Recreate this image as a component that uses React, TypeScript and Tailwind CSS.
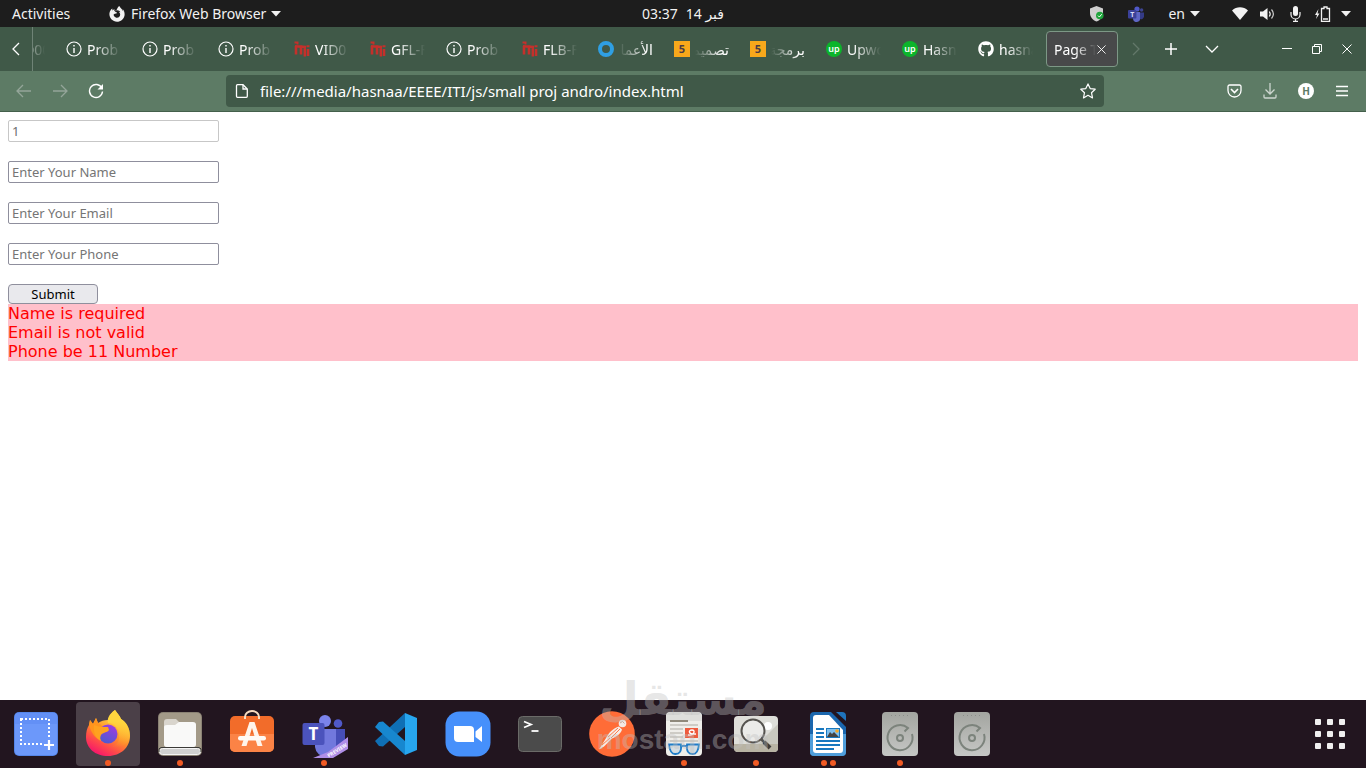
import { ReactNode, useState } from "react"
import clsx from "clsx"
import { FaFirefoxBrowser, FaGithub } from "react-icons/fa"

const ARABIC = /[\u0600-\u06FF]/

function Caret() {
  return (
    <svg width="10" height="6" viewBox="0 0 10 6" fill="#f2f2f2">
      <path d="M0 0h10L5 5.5z" />
    </svg>
  )
}

function TeamsMark({ size }: { size: number }) {
  return (
    <svg width={size} height={size} viewBox="0 0 16 16">
      <circle cx="9" cy="3" r="2.6" fill="#5059c9" />
      <circle cx="13.6" cy="4" r="1.7" fill="#3d4490" />
      <path d="M5 6h7v6a3.5 3.5 0 0 1-7 1z" fill="#5f66c4" />
      <path d="M12 6.5h4v4a3 3 0 0 1-4 2.6z" fill="#343b86" />
      <rect x="0" y="4" width="8.4" height="8.4" rx="1" fill="#3b4199" />
      <text x="4.2" y="10.8" textAnchor="middle" fontSize="7" fontWeight="700" fill="#d8daf5" fontFamily="Noto Sans">
        T
      </text>
    </svg>
  )
}

function TopBar() {
  return (
    <header className="grid h-[27px] shrink-0 grid-cols-[1fr_auto_1fr] items-center bg-[#1d1d1d] text-sm text-[#f2f2f2]">
      <div className="flex items-center pl-3">
        <button className="w-[97px] text-left">Activities</button>
        <button className="flex items-center gap-[5px]">
          <FaFirefoxBrowser size={16} className="mr-px" />
          Firefox Web Browser
          <Caret />
        </button>
      </div>
      <button className="flex gap-2">
        <span>03:37</span>
        <span>14 فبر</span>
      </button>
      <div className="flex items-center justify-end pr-[15px]">
        <svg className="mr-6" width="14" height="16" viewBox="0 0 14 16">
          <path d="M6.5 0 13 2.4V7c0 4-2.7 7-6.5 8.6C2.7 14 0 11 0 7V2.4z" fill="#cfcfcf" />
          <circle cx="9.8" cy="9.5" r="3.8" fill="#1fa53c" />
          <path d="m8 9.6 1.4 1.4 2.3-2.8" fill="none" stroke="#fff" />
        </svg>
        <TeamsMark size={16} />
        <button className="ml-6 flex items-center gap-[5px]">
          en
          <Caret />
        </button>
        <svg className="ml-8" width="16" height="13" viewBox="0 0 16 13" fill="#f2f2f2">
          <path d="M0 3.5C4.5-.8 11.5-.8 16 3.5L8 13z" />
        </svg>
        <svg className="ml-3" width="16" height="14" viewBox="0 0 16 14" fill="none" stroke="#f2f2f2" strokeWidth="1.2">
          <path d="M0 4.5h3L7.5 1v12L3 9.5H0z" fill="#f2f2f2" stroke="none" />
          <path d="M9.3 4.5q1.8 2.5 0 5" />
          <path d="M11.5 2.5q3.8 4.5 0 9" stroke="#ccc" />
        </svg>
        <svg className="ml-3.5" width="11" height="16" viewBox="0 0 11 16">
          <rect x="3" y="0" width="5" height="10" rx="2.5" fill="#f2f2f2" />
          <path d="M1 6v2.5a4.5 4.5 0 0 0 9 0V6M5.5 13v2.5M3 15.3h5" fill="none" stroke="#f2f2f2" strokeWidth="1.2" />
        </svg>
        <svg className="ml-3.5" width="16" height="16" viewBox="0 0 16 16">
          <path d="M3.5 3 0 9h2L1 13l3.500-5.500h-2z" fill="#f2f2f2" />
          <path d="M7 2.5h2V1h3v1.5h2.5v13h-8v-13z" fill="none" stroke="#f2f2f2" strokeWidth="1.3" />
          <path d="M8 13h5" stroke="#f2f2f2" strokeWidth="1.5" />
        </svg>
        <span className="ml-2.5">
          <Caret />
        </span>
      </div>
    </header>
  )
}

function TabIcon({ kind }: { kind: string }) {
  switch (kind) {
    case "info":
      return (
        <svg width="16" height="16" viewBox="0 0 16 16" fill="none" stroke="#fff">
          <circle cx="8" cy="8" r="7" strokeWidth="1.2" />
          <path d="M8 7v5M8 4v1.5" strokeWidth="1.4" />
        </svg>
      )
    case "iti":
      return (
        <svg width="16" height="16" viewBox="0 0 16 16" fill="none" stroke="#c4302b">
          <path d="M2 5v8.5M7 4.5v9M14 8v7" strokeWidth="2.6" />
          <path d="M1 5.200l11 .800M10.800 6v9.500" strokeWidth="2.400" />
          <path d="M.500 1.500h3v2M12.500 5.200h3" strokeWidth="2" />
        </svg>
      )
    case "ring":
      return (
        <svg width="16" height="16" viewBox="0 0 16 16">
          <circle cx="8" cy="8" r="6" fill="none" stroke="#2f9fe3" strokeWidth="4" />
        </svg>
      )
    case "five":
      return (
        <svg width="16" height="16" viewBox="0 0 16 16">
          <rect width="16" height="16" fill="#f8a81b" />
          <text x="8" y="12" textAnchor="middle" fontSize="11" fontWeight="700" fill="#4a3b45" fontFamily="Noto Sans">
            5
          </text>
        </svg>
      )
    case "upwork":
      return (
        <svg width="16" height="16" viewBox="0 0 16 16">
          <circle cx="8" cy="8" r="8" fill="#0bb52b" />
          <text x="8" y="10.5" textAnchor="middle" fontSize="9" fontWeight="600" fill="#fff" fontFamily="Noto Sans">
            up
          </text>
        </svg>
      )
    default:
      return <FaGithub size={16} color="#fff" />
  }
}

const tabs = [
  { icon: "iti", title: "VID00" },
  { icon: "info", title: "Prob" },
  { icon: "info", title: "Prob" },
  { icon: "info", title: "Prob" },
  { icon: "iti", title: "VID0" },
  { icon: "iti", title: "GFL-F" },
  { icon: "info", title: "Prob" },
  { icon: "iti", title: "FLB-F" },
  { icon: "ring", title: "الأعمال" },
  { icon: "five", title: "تصميم" },
  { icon: "five", title: "برمجة" },
  { icon: "upwork", title: "Upwo" },
  { icon: "upwork", title: "Hasn" },
  { icon: "github", title: "hasna" },
]

function Cross({ size }: { size: number }) {
  return (
    <svg width={size} height={size} viewBox="0 0 10 10" fill="none" stroke="#fff">
      <path d="m.5.5 9 9M9.5.5l-9 9" />
    </svg>
  )
}

function TabStrip() {
  return (
    <div className="flex h-11 shrink-0 bg-[#405948] text-sm text-white">
      <button aria-label="Scroll tabs left" className="flex w-8 items-center justify-center">
        <svg width="8" height="14" viewBox="0 0 8 14" fill="none" stroke="#fff" strokeWidth="1.3">
          <path d="M7 1 1 7l6 6" />
        </svg>
      </button>
      <div className="flex min-w-0 flex-1 justify-end overflow-hidden border-l border-[#6f8376] py-1">
        {tabs.map((tab, i) => {
          const rtl = ARABIC.test(tab.title)
          return (
            <button key={i} className="flex w-[76px] shrink-0 items-center gap-[5px] pt-0.5 pl-2">
              <span className="-mt-0.5 shrink-0">
                <TabIcon kind={tab.icon} />
              </span>
              <span
                dir={rtl ? "rtl" : "ltr"}
                className={clsx(
                  "w-[34px] overflow-hidden text-start whitespace-nowrap",
                  rtl
                    ? "[mask-image:linear-gradient(to_left,black_20%,transparent)]"
                    : "[mask-image:linear-gradient(to_right,black_20%,transparent)]"
                )}
              >
                {tab.title}
              </span>
            </button>
          )
        })}
        <div className="mr-1 flex w-[72px] shrink-0 items-center rounded-sm border border-[#7d9886] bg-[#48494a] pl-[7px]">
          <button className="w-[42px] overflow-hidden pt-0.5 text-left whitespace-nowrap [mask-image:linear-gradient(to_right,black_50%,transparent)]">
            Page T
          </button>
          <button aria-label="Close tab" className="p-px">
            <Cross size={9} />
          </button>
        </div>
      </div>
      <button aria-label="Scroll tabs right" className="flex w-7 items-center justify-center">
        <svg width="8" height="14" viewBox="0 0 8 14" fill="none" stroke="#63786a" strokeWidth="1.3">
          <path d="m1 1 6 6-6 6" />
        </svg>
      </button>
      <button aria-label="New tab" className="flex w-[42px] items-center justify-center">
        <svg width="12" height="12" viewBox="0 0 12 12" stroke="#fff" strokeWidth="1.5">
          <path d="M6 0v12M0 6h12" />
        </svg>
      </button>
      <button aria-label="List all tabs" className="flex w-10 items-center justify-center">
        <svg width="14" height="8" viewBox="0 0 14 8" fill="none" stroke="#fff" strokeWidth="1.3">
          <path d="m1 1 6 6 6-6" />
        </svg>
      </button>
      <div className="flex pr-1 pl-10">
        <button aria-label="Minimize" className="flex w-[30px] items-center justify-center">
          <svg width="10" height="2" viewBox="0 0 10 2">
            <path d="M0 .5h10" stroke="#fff" />
          </svg>
        </button>
        <button aria-label="Restore" className="flex w-[30px] items-center justify-center">
          <svg width="10" height="10" viewBox="0 0 10 10" fill="none" stroke="#fff">
            <path d="M.5 2.5h7v7h-7zM2.5 2.5v-2h7v7h-2" />
          </svg>
        </button>
        <button aria-label="Close" className="flex w-[30px] items-center justify-center">
          <Cross size={10} />
        </button>
      </div>
    </div>
  )
}

function ToolButton({ label, children, disabled }: { label: string; children: ReactNode; disabled?: boolean }) {
  return (
    <button aria-label={label} disabled={disabled} className="flex w-9 items-center justify-center">
      {children}
    </button>
  )
}

function Toolbar() {
  const [url, setUrl] = useState("file:///media/hasnaa/EEEE/ITI/js/small proj andro/index.html")

  return (
    <div className="flex shrink-0 border-b border-[#44604c] bg-[#5d7b65] px-1.5 py-1">
      <ToolButton label="Back" disabled>
        <svg width="16" height="14" viewBox="0 0 16 14" fill="none" stroke="#94a599" strokeWidth="1.3">
          <path d="M15 7H1.5M7 1 1 7l6 6" />
        </svg>
      </ToolButton>
      <ToolButton label="Forward" disabled>
        <svg width="16" height="14" viewBox="0 0 16 14" fill="none" stroke="#94a599" strokeWidth="1.3">
          <path d="M1 7h13.5M9 1l6 6-6 6" />
        </svg>
      </ToolButton>
      <ToolButton label="Reload">
        <svg width="16" height="16" viewBox="0 0 16 16" fill="none" stroke="#fff" strokeWidth="1.4">
          <path d="M13.8 5A6.5 6.5 0 1 0 14.5 8.5" />
          <path d="M15 1v5.5H9.5z" fill="#fff" stroke="none" />
        </svg>
      </ToolButton>
      <div className="mx-28 flex h-8 min-w-0 flex-1 items-center rounded bg-[#405948] px-2">
        <svg className="shrink-0" width="16" height="16" viewBox="0 0 16 16" fill="none" stroke="#fff" strokeWidth="1.3">
          <path d="M3.5 1.7H9L13.3 6v7.3a1 1 0 0 1-1 1H3.5a1 1 0 0 1-1-1V2.7a1 1 0 0 1 1-1z" />
          <path d="M9 2v4h4" />
        </svg>
        <input
          aria-label="Address"
          value={url}
          onChange={(e) => setUrl(e.target.value)}
          className="ml-2.5 min-w-0 flex-1 text-[15px] text-white outline-none"
        />
        <button aria-label="Bookmark this page">
          <svg width="16" height="16" viewBox="0 0 16 16" fill="none" stroke="#fff" strokeWidth="1.2" strokeLinejoin="round">
            <path d="m8 .9 2.2 4.7 5 .6-3.7 3.5 1 5.2L8 12.300l-4.500 2.600 1-5.200L.800 6.200l5-.600z" />
          </svg>
        </button>
      </div>
      <ToolButton label="Save to Pocket">
        <svg width="15" height="14" viewBox="0 0 15 14" fill="none" stroke="#fff" strokeWidth="1.3">
          <path d="M2.5 1h10A1.5 1.5 0 0 1 14 2.500V6.500a6.500 6.500 0 0 1-13 0v-4A1.500 1.500 0 0 1 2.500 1z" />
          <path d="M4 5l3.500 3.500L11 5" strokeWidth="1.600" />
        </svg>
      </ToolButton>
      <ToolButton label="Downloads">
        <svg width="14" height="16" viewBox="0 0 14 16" fill="none" stroke="#cdd6cf" strokeWidth="1.3">
          <path d="M7 0v11M2.5 6.5 7 11l4.5-4.5M1 11.5v2.500a1 1 0 0 0 1 1h10a1 1 0 0 0 1-1v-2.500" />
        </svg>
      </ToolButton>
      <ToolButton label="Account">
        <span className="flex size-4 items-center justify-center rounded-full bg-white text-[10px] leading-4 font-bold text-[#5d7b65]">
          H
        </span>
      </ToolButton>
      <ToolButton label="Menu">
        <svg width="12" height="12" viewBox="0 0 12 12" stroke="#fff" strokeWidth="1.3">
          <path d="M0 1.5h12M0 6h12M0 10.5h12" />
        </svg>
      </ToolButton>
    </div>
  )
}

const fields = [
  { id: "name", type: "text", placeholder: "Enter Your Name" },
  { id: "email", type: "text", placeholder: "Enter Your Email" },
  { id: "phone", type: "text", placeholder: "Enter Your Phone" },
]

const errors = ["Name is required", "Email is not valid", "Phone be 11 Number"]

function PageContent() {
  return (
    <main className="flex-1 bg-white p-2">
      <form className="flex flex-col items-start gap-[19px] text-[13px]" onSubmit={(e) => e.preventDefault()}>
        <input
          aria-label="Id"
          disabled
          value="1"
          className="h-[22px] w-[211px] rounded-xs border border-[#c7c7c7] bg-white px-[3px] text-[#6d6d6d]"
        />
        {fields.map((field) => (
          <input
            key={field.id}
            id={field.id}
            type={field.type}
            aria-label={field.placeholder}
            placeholder={field.placeholder}
            className="h-[22px] w-[211px] rounded-xs border border-[#8f8f9d] bg-white px-[3px] placeholder:text-[#757575]"
          />
        ))}
        <button
          type="submit"
          className="flex h-5 w-[90px] items-center justify-center rounded border border-[#8f8f9d] bg-[#e9e9ed] pt-0.5 text-black"
        >
          Submit
        </button>
      </form>
      <div className="bg-[#ffc0cb] font-['DejaVu_Sans',sans-serif] text-base leading-[19px] text-[#ff0000]">
        {errors.map((error) => (
          <p key={error}>{error}</p>
        ))}
      </div>
    </main>
  )
}

function ScreenshotIcon() {
  return (
    <>
      <rect x="2" y="2" width="44" height="44" rx="5" fill="#5585e8" />
      <rect x="3" y="3" width="42" height="42" rx="4" fill="#6c98fa" />
      <path d="M3 7a4 4 0 0 1 4-4h34a4 4 0 0 1 4 4v7H3z" fill="#6390f6" />
      <rect x="9" y="9" width="28" height="25" fill="none" stroke="#fff" strokeWidth="2" strokeDasharray="2 2" />
      <path d="M37 29v12M31 35h12" stroke="#6c98fa" strokeWidth="4" />
      <path d="M37 30v10M32 35h10" stroke="#fff" strokeWidth="2.2" />
    </>
  )
}

function FirefoxIcon() {
  return (
    <>
      <defs>
        <linearGradient id="fx-body" x1="0.8" y1="0.1" x2="0.3" y2="1">
          <stop offset="0.15" stopColor="#ffd53d" />
          <stop offset="0.5" stopColor="#ff8a2b" />
          <stop offset="0.75" stopColor="#ff4a4a" />
          <stop offset="1" stopColor="#f5156c" />
        </linearGradient>
        <linearGradient id="fx-flame" x1="0.5" y1="0" x2="0.5" y2="1">
          <stop offset="0.3" stopColor="#ffd63e" />
          <stop offset="1" stopColor="#ffb02e" stopOpacity="0" />
        </linearGradient>
        <linearGradient id="fx-globe" x1="0.8" y1="0" x2="0.3" y2="1">
          <stop offset="0" stopColor="#a23be0" />
          <stop offset="1" stopColor="#4a5bd0" />
        </linearGradient>
      </defs>
      <path
        d="M31 0c2 3 5 6 6 9 5 3 9 9 9 17 0 11-9 20-22 20S2 38 2 27c0-5 1-9 3-12l1-5 3 4 3-6 2 5c3-2 6-3 10-3 1-4 3-7 7-10z"
        fill="url(#fx-body)"
      />
      <path d="M5 15l1-5 3 4 3-6 2 5c3 1 4 3 4 4h6l1 3-7 3c-2 1-2 4-1 7-6-1-10-8-12-15z" fill="#ff941d" />
      <circle cx="24" cy="24" r="9.500" fill="url(#fx-globe)" />
      <path d="M10 15c4 1 6 2 8 2h6l1 3c-2 3-6 2-8 5-1 2-1 4 0 6-5-2-8-9-7-16z" fill="#ffa11f" />
      <path d="M31 0c-6 4-8 9-7 13 6 0 11 5 11 12 1 7-3 11-8 12 10 2 18-3 19-12 0-7-4-13-9-16-1-3-4-6-6-9z" fill="url(#fx-flame)" />
    </>
  )
}

function FilesIcon() {
  return (
    <>
      <rect x="2" y="2" width="44" height="44" rx="5" fill="#8a8274" />
      <rect x="3" y="3" width="42" height="42" rx="4" fill="#a39a88" />
      <path d="M8 12a3 3 0 0 1 3-3h9l4 4h13a3 3 0 0 1 3 3v18a3 3 0 0 1-3 3H11a3 3 0 0 1-3-3z" fill="#d9d5cd" />
      <path d="M8 17q0-2 3-2h8l4-3h14a3 3 0 0 1 3 3v19a3 3 0 0 1-3 3H11a3 3 0 0 1-3-3z" fill="#f9f9f8" />
      <rect x="3.5" y="38.5" width="41" height="6" rx="3" fill="#d0d0d0" stroke="#f4f4f4" />
      <path d="M3 42q-1-4 2-4.500h38q3 .500 2 4.500" fill="none" stroke="#3b3a37" />
    </>
  )
}

function SoftwareIcon() {
  return (
    <>
      <rect x="2" y="6" width="44" height="36" rx="5" fill="#f26c2a" />
      <path d="M2 24h44v13a5 5 0 0 1-5 5H7a5 5 0 0 1-5-5z" fill="#fb8346" />
      <path d="M17 9V7a7 6 0 0 1 14 0v2" fill="none" stroke="#f8dcc0" strokeWidth="2" />
      <path d="M21.500 12h5l8 24h-5L24 18l-5.500 18h-5z" fill="#fff4ea" />
      <rect x="10" y="26" width="28" height="4.500" rx="2.200" fill="#fffaf5" />
    </>
  )
}

function TeamsIcon() {
  return (
    <>
      <circle cx="25" cy="11" r="6" fill="#7b83eb" />
      <circle cx="38" cy="13.5" r="4.3" fill="#5059c9" />
      <path d="M34 19h11v13a8 8 0 0 1-11 6z" fill="#464eb8" />
      <path d="M15 19h21v16a10.500 10.500 0 0 1-21 2z" fill="#7178dd" />
      <rect x="2.5" y="13" width="22" height="22" rx="2" fill="#4b53bc" />
      <text x="13.5" y="30" textAnchor="middle" fontSize="17" fontWeight="700" fill="#fff" fontFamily="Noto Sans">
        T
      </text>
      <path d="M13 48h20l15-9V27L28 42z" fill="#b08fe8" />
      <text x="37" y="42" textAnchor="middle" fontSize="5" fontWeight="700" fill="#fff" fontFamily="Noto Sans" transform="rotate(-32 37 40)">
        PREVIEW
      </text>
    </>
  )
}

function CodeIcon() {
  return (
    <>
      <path d="m3 31 4 5 4 .5L33 17V3z" fill="#0f6fb5" />
      <path d="m3 17 4-5 4-.5L33 31v14z" fill="#1787cf" />
      <path d="m33 3 12 5v32l-12 5z" fill="#27a6ef" />
    </>
  )
}

function ZoomIcon() {
  return (
    <>
      <rect x="1.5" y="1.5" width="45" height="45" rx="14" fill="#4690fb" />
      <path d="M10 16h16a4 4 0 0 1 4 4v12H14a4 4 0 0 1-4-4z" fill="#fff" />
      <path d="M31.500 21.500 38 16v16l-6.500-5z" fill="#fff" />
    </>
  )
}

function TerminalIcon() {
  return (
    <>
      <rect x="2.5" y="6.500" width="43" height="35" rx="4" fill="#4b4b4b" stroke="#6b6b68" />
      <path d="m8 11.500 7 3-7 3" fill="none" stroke="#fff" strokeWidth="1.800" />
      <path d="M15.500 21h7" stroke="#fff" strokeWidth="1.800" />
    </>
  )
}

function PostmanIcon() {
  return (
    <>
      <circle cx="24" cy="24" r="22.8" fill="#ff6c37" />
      <circle cx="34.5" cy="13.5" r="3.8" fill="#f4e9e4" />
      <path d="M31 16.500c-6 2-10 6-12 10l-8 13 5-3 8-8c5-2 9-5 10-9z" fill="#f6ece6" />
      <path d="m20 27 10-9M23 28l9-9M14 35l8-7" stroke="#ff6c37" strokeWidth="0.900" />
      <path d="m32 13 2.500-1.500 2 2" fill="none" stroke="#c9a99a" />
    </>
  )
}

function DocumentIcon() {
  return (
    <>
      <rect x="6" y="2" width="36" height="44" rx="4" fill="#efeeea" />
      <path d="M6 7a5 5 0 0 1 5-5h26a5 5 0 0 1 5 5v4H6z" fill="#dededb" />
      <path d="M10 11h18" stroke="#8f897b" strokeWidth="2" />
      <path d="M10 15h28M10 19h13M10 23h13M10 27h13M10 31h28" stroke="#c4c1ba" strokeWidth="1.500" />
      <rect x="25" y="18" width="13" height="10" fill="#ee5a3c" />
      <path d="M28 25c6 1 8-5 4-5s-4 5 4 4" fill="none" stroke="#fff" strokeWidth="1.300" />
      <path d="M9 34.500h12q1 10-6 9.500-5 0-6-9.500zM27 34.500h12q-1 9.500-6 9.500-7 .500-6-9.500z" fill="#d3dde3" stroke="#1f7cc9" strokeWidth="1.800" />
      <path d="M21 36.500q3-1.500 6 0" fill="none" stroke="#1f7cc9" strokeWidth="1.800" />
    </>
  )
}

function ImageViewerIcon() {
  return (
    <>
      <rect x="2" y="6" width="44" height="36" rx="4" fill="#deded9" />
      <path d="M2 34h44v4a4 4 0 0 1-4 4H6a4 4 0 0 1-4-4z" fill="#b8b3a3" />
      <path d="m26 34 20-20v20z" fill="#c9c8bf" />
      <circle cx="36" cy="16" r="4" fill="#fff" />
      <circle cx="21" cy="21" r="11.5" fill="#f1f1ef" fillOpacity="0.7" stroke="#55534f" strokeWidth="2" />
      <path d="m29.500 29.500 3 3" stroke="#55534f" strokeWidth="2.500" />
      <path d="m32 32 6 6" stroke="#3c3a38" strokeWidth="4" />
    </>
  )
}

function WriterIcon() {
  return (
    <>
      <path d="M10 2h17l15 15v25a4 4 0 0 1-4 4H10a4 4 0 0 1-4-4V6a4 4 0 0 1 4-4z" fill="#1b67ae" />
      <path d="M6 24h36v18a4 4 0 0 1-4 4H10a4 4 0 0 1-4-4z" fill="#4f9edb" />
      <path d="M12 5h13l14 15v20a3 3 0 0 1-3 3H12a3 3 0 0 1-3-3V8a3 3 0 0 1 3-3z" fill="#fff" />
      <path d="M32 2h6a4 4 0 0 1 4 4v5z" fill="#1f74bd" />
      <path d="M12 19h8M12 23h8M12 27h8M12 31h24M12 35h24M12 39h18" stroke="#1878bf" strokeWidth="2" />
      <rect x="22.500" y="18.500" width="13" height="9" fill="#7fc0ee" stroke="#1878bf" />
      <circle cx="33" cy="21" r="1.800" fill="#f5a623" />
      <path d="m23 27 3-5 2 2 2-2 5 5z" fill="#444" />
    </>
  )
}

function DiskIcon() {
  return (
    <>
      <defs>
        <linearGradient id="disk-metal" x1="0" y1="0" x2="0" y2="1">
          <stop offset="0" stopColor="#a3a5a0" />
          <stop offset="1" stopColor="#c6c7c5" />
        </linearGradient>
      </defs>
      <rect x="6" y="2" width="36" height="44" rx="4" fill="url(#disk-metal)" />
      <path d="M15 5.500h20" stroke="#8b8d89" strokeDasharray="1 3" />
      <path d="M36 24a12.500 12.500 0 1 1-4-6l-3.500 3.500" fill="none" stroke="#7c837c" strokeWidth="2" />
      <circle cx="24" cy="28" r="3" fill="none" stroke="#7c837c" strokeWidth="2" />
    </>
  )
}

const dockItems = [
  { name: "Screenshot", Icon: ScreenshotIcon, windows: 0 },
  { name: "Firefox", Icon: FirefoxIcon, windows: 1, active: true },
  { name: "Files", Icon: FilesIcon, windows: 1 },
  { name: "Ubuntu Software", Icon: SoftwareIcon, windows: 0 },
  { name: "Microsoft Teams", Icon: TeamsIcon, windows: 1 },
  { name: "Visual Studio Code", Icon: CodeIcon, windows: 0 },
  { name: "Zoom", Icon: ZoomIcon, windows: 0 },
  { name: "Terminal", Icon: TerminalIcon, windows: 0 },
  { name: "Postman", Icon: PostmanIcon, windows: 0 },
  { name: "Document Viewer", Icon: DocumentIcon, windows: 1 },
  { name: "Image Viewer", Icon: ImageViewerIcon, windows: 1 },
  { name: "LibreOffice Writer", Icon: WriterIcon, windows: 2 },
  { name: "Disk EEEE", Icon: DiskIcon, windows: 1 },
  { name: "Disk", Icon: DiskIcon, windows: 0 },
]

function Dock() {
  return (
    <nav className="flex shrink-0 gap-2 bg-[#22151f] px-1 py-0.5">
      {dockItems.map(({ name, Icon, windows, active }) => (
        <button
          key={name}
          aria-label={name}
          className={clsx("relative flex size-16 items-center justify-center rounded-sm", active && "bg-[#4b4048]")}
        >
          <svg width="48" height="48" viewBox="0 0 48 48">
            <Icon />
          </svg>
          <span className="absolute inset-x-0 bottom-0 flex justify-center gap-[3px]">
            {Array.from({ length: windows }, (_, i) => (
              <span key={i} className="size-1.5 rounded-full bg-[#f15a24]" />
            ))}
          </span>
        </button>
      ))}
      <button aria-label="Show Applications" className="ml-auto flex size-16 items-center justify-center">
        <span className="grid grid-cols-3 gap-1.5">
          {Array.from({ length: 9 }, (_, i) => (
            <span key={i} className="size-1.5 rounded-[1px] bg-[#f0efef]" />
          ))}
        </span>
      </button>
    </nav>
  )
}

function Watermark() {
  return (
    <div className="pointer-events-none absolute bottom-3.5 left-1/2 flex -translate-x-1/2 flex-col items-center font-bold text-[#c0c0c0]/40">
      <span className="font-['DejaVu_Sans',sans-serif] text-[46px] leading-[54px]">مستقل</span>
      <span className="font-['Liberation_Sans',sans-serif] text-[28px] leading-7">mostaql.com</span>
    </div>
  )
}

export default function App() {
  return (
    <div className="relative flex min-h-screen flex-col overflow-hidden font-['Noto_Sans','DejaVu_Sans',sans-serif]">
      <TopBar />
      <TabStrip />
      <Toolbar />
      <PageContent />
      <Dock />
      <Watermark />
    </div>
  )
}
